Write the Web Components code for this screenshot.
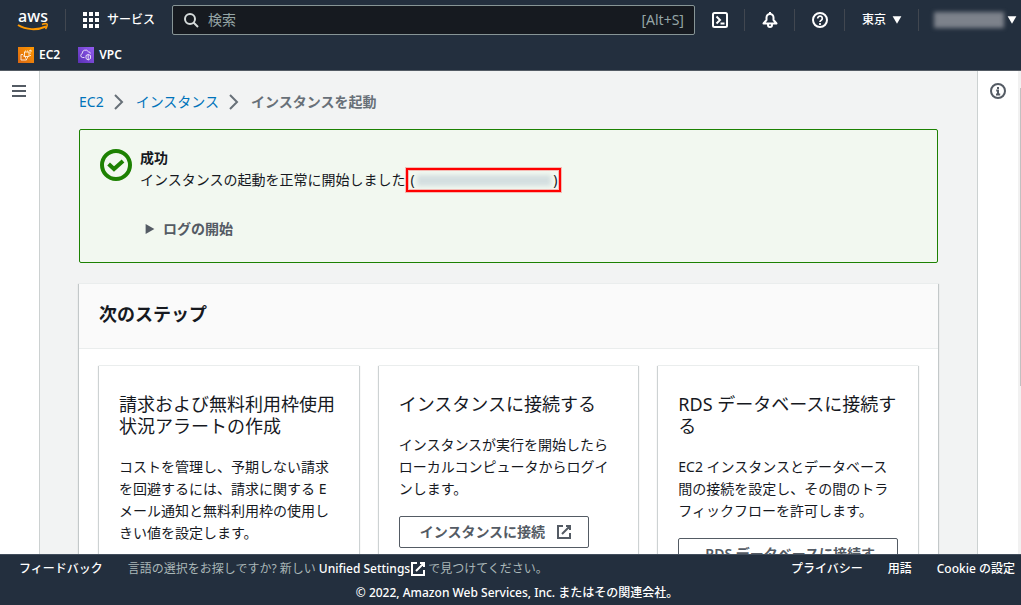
<!DOCTYPE html>
<html lang="ja">
<head>
<meta charset="utf-8">
<meta name="viewport" content="width=device-width, initial-scale=1">
<title>インスタンスを起動 | EC2</title>
<style>
html,body{margin:0;height:100%}
body{font:14px/22px "Noto Sans","Noto Sans CJK JP",sans-serif;color:#16191f;background:#f2f3f3;overflow:hidden}
</style>
</head>
<body>
<console-app></console-app>
<script>
const gradient=(from,to)=>`<defs><linearGradient id="g" x1="0" y1="1" x2="1" y2="0"><stop stop-color="${from}"/><stop offset="1" stop-color="${to}"/></linearGradient></defs><path d="M0 0h16v16H0z" fill="url(#g)" stroke="none"/>`;
const ICONS={
  grid:'<g fill="currentColor" stroke="none"><path d="M0 0h4v4H0zM6 0h4v4H6zM12 0h4v4h-4zM0 6h4v4H0zM6 6h4v4H6zM12 6h4v4h-4zM0 12h4v4H0zM6 12h4v4H6zM12 12h4v4h-4z"/></g>',
  search:'<circle cx="7" cy="7" r="5"/><path d="M10.5 10.5L15 15"/>',
  shell:'<rect x="1" y="1" width="14" height="14" rx="1.500"/><path d="M4.500 4.500L8 8l-3.500 3.500M8.500 11.500h4"/>',
  bell:'<path d="M1.500 11.500L4.500 8V5.500a3.500 3.500 0 0 1 7 0V8l3 3.500z" stroke-linejoin="round"/><path d="M8 0v2.500M6 12v1a2 2 0 0 0 4 0v-1"/>',
  help:'<circle cx="8" cy="8" r="7"/><path d="M5.700 6.500a2.300 2.300 0 1 1 3.600 1.800C8.400 8.900 8 9.100 8 10M8 11v2" stroke-width="1.700"/>',
  info:'<circle cx="8" cy="8" r="7"/><path d="M8 4v2M6.200 7.500H8V11M6 11.500h4.200"/>',
  menu:'<path d="M1 3h14M1 8h14M1 13h14"/>',
  down:'<path d="M1 2h14L8 14z" fill="currentColor" stroke="none"/>',
  right:'<path d="M1 0l14 8L1 16z" fill="currentColor" stroke="none"/>',
  chevron:'<path d="M3 1l7 7-7 7"/>',
  external:'<path d="M10 2h4v4M6 10l8-8M14 9V14H2V2h5"/>',
  success:'<circle cx="8" cy="8" r="7"/><path d="M4.300 7.500L7 10l4.500-4"/>',
  ec2:gradient('#d86613','#ff9900')+'<g stroke="#fff" stroke-width=".8"><rect x="6.500" y="5" width="4.500" height="4.500"/><path d="M5 7.500H3V13h5.500v-1.500M7.500 3.500v1M9.500 3.500v1M11.500 6h1.500M11.500 8.500H13M11 4l2-1v2M7.500 10v1.500M9.500 10v1.500M5 9h1"/></g>',
  vpc:gradient('#5a30b5','#945df2')+'<g stroke="#fff" stroke-width=".8"><path d="M6.500 10.500H4.500a2 2 0 0 1-.3-3.900 3.300 3.300 0 0 1 6.200-1.800 1.900 1.900 0 0 1 2 1.700M8 8.500L10.200 7.500 12.500 8.500v3l-2.300 1.500-2.200-1.500zM10.200 7.500V13"/></g>'
};
function define(name,html,setup){
  customElements.define(name,class extends HTMLElement{
    constructor(){
      super();
      const t=document.createElement('template');
      t.innerHTML=html;
      this.attachShadow({mode:'open'}).append(t.content.cloneNode(true));
    }
    connectedCallback(){ if(setup) setup(this,this.shadowRoot); }
  });
}

define('ui-icon',`<style>
:host{display:block;flex:none;width:var(--size,16px);height:var(--size,16px)}
svg{display:block;width:100%;height:100%;fill:none;stroke:currentColor;stroke-width:2}
</style><svg viewBox="0 0 16 16" aria-hidden="true"></svg>`,
(el,root)=>{root.querySelector('svg').innerHTML=ICONS[el.getAttribute('name')]||'';});

define('redacted-text',`<style>
:host{display:block;width:var(--w,70px);height:var(--h,16px);background:var(--c,#7d828b);filter:blur(2px)}
</style>`);

define('aws-logo',`<style>
:host{display:block}
a{display:flex;flex-direction:column;align-items:center;width:32px;color:#fff;text-decoration:none}
span{font-size:16px;font-weight:500;line-height:14px}
svg{display:block;margin-top:-1px}
</style><a href="#" aria-label="AWS"><span>aws</span>
<svg width="32" height="10" viewBox="0 0 32 10" fill="none" stroke="#f90"><path d="M1 3c8 5 19 5.500 28 1.500" stroke-width="2"/><path d="M25 2.500c2-1 4.500-1 5-.5s0 3-1.500 5" stroke-width="1.500"/></svg></a>`);

define('nav-cell',`<style>
:host{display:flex;align-items:center;height:22px;border-right:1px solid #414750}
:host([last]){border-right:0}
button{display:flex;align-items:center;gap:6px;border:0;background:none;color:#fff;font:500 12px/18px "Noto Sans","Noto Sans CJK JP",sans-serif;padding:0 16px 0 17px}
:host([last]) button{gap:3px;padding:0 4px 0 15px}
</style><button type="button"><slot></slot></button>`,
(el,root)=>{root.querySelector('button').setAttribute('aria-label',el.getAttribute('label')||'');});

define('service-link',`<style>
a{display:flex;align-items:center;gap:5px;color:#fff;text-decoration:none;font-weight:600;font-size:12px;line-height:18px}
</style><a href="#"><slot></slot></a>`);

define('console-header',`<style>
:host{display:block;flex:none;background:#232f3e;color:#fff;border-bottom:1px solid #545b64}
.bar{display:flex;align-items:center;height:40px}
aws-logo{margin:0 16px 0 17px}
.services{display:flex;align-items:center;gap:8px;height:22px;border:0;border-left:1px solid #414750;background:none;color:#fff;padding:0 17px;font:500 12px/18px "Noto Sans","Noto Sans CJK JP",sans-serif;white-space:nowrap}
.search{flex:1;min-width:0;display:flex;align-items:center;box-sizing:border-box;height:30px;background:#161a20;border:1px solid #879596;border-radius:2px;padding:0 10px;color:#95a5a6}
.search ui-icon{color:#d5dbdb}
input{flex:1;min-width:0;border:0;outline:0;background:none;color:#fff;font:14px/22px "Noto Sans","Noto Sans CJK JP",sans-serif;padding:0 0 0 9px}
input::placeholder{color:#95a5a6;opacity:1}
.favs{display:flex;align-items:center;gap:18px;height:30px;padding-left:18px}
.small{--size:10px}
</style>
<header>
<div class="bar"><aws-logo></aws-logo>
<button class="services" type="button"><ui-icon name="grid"></ui-icon>サービス</button>
<label class="search"><ui-icon name="search"></ui-icon><input type="search" placeholder="検索" aria-label="検索"><span>[Alt+S]</span></label>
<nav-cell label="CloudShell"><ui-icon name="shell"></ui-icon></nav-cell>
<nav-cell label="通知"><ui-icon name="bell"></ui-icon></nav-cell>
<nav-cell label="ヘルプ"><ui-icon name="help"></ui-icon></nav-cell>
<nav-cell label="東京">東京<ui-icon class="small" name="down"></ui-icon></nav-cell>
<nav-cell label="アカウント" last><redacted-text></redacted-text><ui-icon class="small" name="down"></ui-icon></nav-cell>
</div>
<nav class="favs"><service-link><ui-icon name="ec2"></ui-icon>EC2</service-link><service-link><ui-icon name="vpc"></ui-icon>VPC</service-link></nav>
</header>`);

define('side-rail',`<style>
:host{display:block;flex:none;box-sizing:border-box;width:40px;background:#fff;border-right:1px solid #ccd1d1;color:#545b64}
:host([end]){width:41px;border-right:0;border-left:1px solid #ccd1d1}
button{display:block;border:0;background:none;color:inherit;padding:12px 11px}
:host([end]) button{padding:12px}
</style><button type="button"><slot></slot></button>`,
(el,root)=>{root.querySelector('button').setAttribute('aria-label',el.getAttribute('label'));});

define('scroll-track',`<style>
:host{display:block;flex:none;width:3px;padding-top:17px;background:#f1f1f1}
div{height:64%;margin-left:2px;background:#c1c1c1}
</style><div></div>`);

define('bread-crumbs',`<style>
:host{display:block}
ol{display:flex;align-items:center;gap:8px;list-style:none;margin:0;padding:0}
li{display:flex;align-items:center;gap:8px}
a{color:#0073bb;text-decoration:none}
ui-icon{color:#687078}
[aria-current]{font-weight:600;color:#687078}
</style><nav aria-label="パンくず"><ol><li><a href="#">EC2</a><ui-icon name="chevron"></ui-icon></li><li><a href="#">インスタンス</a><ui-icon name="chevron"></ui-icon></li><li aria-current="page">インスタンスを起動</li></ol></nav>`);

define('success-alert',`<style>
:host{display:flex;gap:8px;border:1px solid #1d8102;border-radius:2px;background:#f2f8f0;padding:17px 20px 22px}
.mark{--size:32px;color:#1d8102;margin-top:2px}
strong{display:block;font-weight:700}
.msg{display:flex;align-items:center;gap:1px;height:22px}
.id{display:flex;align-items:center;justify-content:space-between;box-sizing:border-box;width:155px;height:24px;border:2px solid #f00;box-shadow:0 0 0 1px rgba(255,0,0,.25),inset 0 0 0 1px rgba(255,0,0,.25);padding:0 2px}
redacted-text{--w:134px;--h:11px;--c:#d4dfe0}
details{margin:27px 0 0 5px}
summary{display:flex;align-items:center;gap:8px;list-style:none;font-weight:600;color:#545b64}
summary ui-icon{--size:10px}
</style><ui-icon class="mark" name="success"></ui-icon>
<div><strong>成功</strong><div class="msg"><span>インスタンスの起動を正常に開始しました</span><span class="id">(<redacted-text></redacted-text>)</span></div>
<details><summary><ui-icon name="right"></ui-icon>ログの開始</summary></details></div>`);

define('step-panel',`<style>
:host{display:block;background:#fff;border-top:1px solid #eaeded;box-shadow:0 1px 1px rgba(0,28,36,.3),1px 1px 1px rgba(0,28,36,.15),-1px 1px 1px rgba(0,28,36,.15)}
header{background:#fafafa;border-bottom:1px solid #eaeded;padding:19px 20px 23px}
h2{margin:0;font-size:18px;line-height:22px;font-weight:700}
.cards{display:grid;grid-template-columns:repeat(3,minmax(0,1fr));gap:20px;padding:16px 20px 20px}
</style><header><h2><slot name="title"></slot></h2></header><div class="cards"><slot></slot></div>`);

define('step-card',`<style>
:host{display:block;border-top:1px solid #eaeded;box-shadow:0 1px 1px rgba(0,28,36,.3),1px 1px 1px rgba(0,28,36,.15),-1px 1px 1px rgba(0,28,36,.15);padding:27px 20px 20px}
h3{margin:0 0 19px;font-size:18px;line-height:22px;font-weight:400}
p{margin:0 0 16px}
button{display:block;box-sizing:border-box;max-width:100%;min-height:32px;border:1px solid #545b64;border-radius:2px;background:#fff;color:#545b64;font:600 14px/22px "Noto Sans","Noto Sans CJK JP",sans-serif;padding:4px 16px 4px 20px}
ui-icon{display:inline-block;vertical-align:-3px;margin-left:11px}
</style><h3><slot name="title"></slot></h3><p><slot></slot></p><button type="button"><slot name="action"></slot><ui-icon name="external"></ui-icon></button>`,
(el,root)=>{if(!el.querySelector('[slot=action]'))root.querySelector('button').remove();});

define('console-footer',`<style>
:host{display:block;flex:none;background:#232f3e;border-top:1px solid #414d5c;color:#fff;font-size:12px;line-height:18px;padding:5px 6px 3px 19px;font-weight:500}
.row{display:flex;gap:25px}
a{color:#fff;text-decoration:none}
.lang{flex:1;display:flex;align-items:center;color:#aab7b8;font-weight:400;white-space:pre}
.lang a{display:flex;align-items:center;font-weight:500;margin-right:2px}
.legal{margin-top:6px;text-align:center}
</style><footer><div class="row"><a href="#">フィードバック</a><span class="lang"><span>言語の選択をお探しですか? 新しい </span><a href="#">Unified Settings<ui-icon name="external"></ui-icon></a><span>で見つけてください。</span></span><a href="#">プライバシー</a><a href="#">用語</a><a href="#">Cookie の設定</a></div>
<div class="legal">© 2022, Amazon Web Services, Inc. またはその関連会社。</div></footer>`);

define('console-app',`<style>
:host{display:flex;flex-direction:column;height:100vh}
.body{flex:1;min-height:0;display:flex;overflow:hidden}
main{flex:1;min-width:0;overflow:hidden;padding:20px 39px}
bread-crumbs{margin-bottom:16px}
success-alert{margin-bottom:20px}
</style>
<console-header></console-header>
<div class="body">
<side-rail label="メニュー"><ui-icon name="menu"></ui-icon></side-rail>
<main>
<bread-crumbs></bread-crumbs>
<success-alert></success-alert>
<step-panel><span slot="title">次のステップ</span>
<step-card><span slot="title">請求および無料利用枠使用状況アラートの作成</span>コストを管理し、予期しない請求を回避するには、請求に関する E メール通知と無料利用枠の使用しきい値を設定します。</step-card>
<step-card><span slot="title">インスタンスに接続する</span>インスタンスが実行を開始したらローカルコンピュータからログインします。<span slot="action">インスタンスに接続</span></step-card>
<step-card><span slot="title">RDS データベースに接続する</span>EC2 インスタンスとデータベース間の接続を設定し、その間のトラフィックフローを許可します。<span slot="action">RDS データベースに接続する</span></step-card>
</step-panel>
</main>
<side-rail end label="情報"><ui-icon name="info"></ui-icon></side-rail>
<scroll-track></scroll-track>
</div>
<console-footer></console-footer>`);
</script>
</body>
</html>
